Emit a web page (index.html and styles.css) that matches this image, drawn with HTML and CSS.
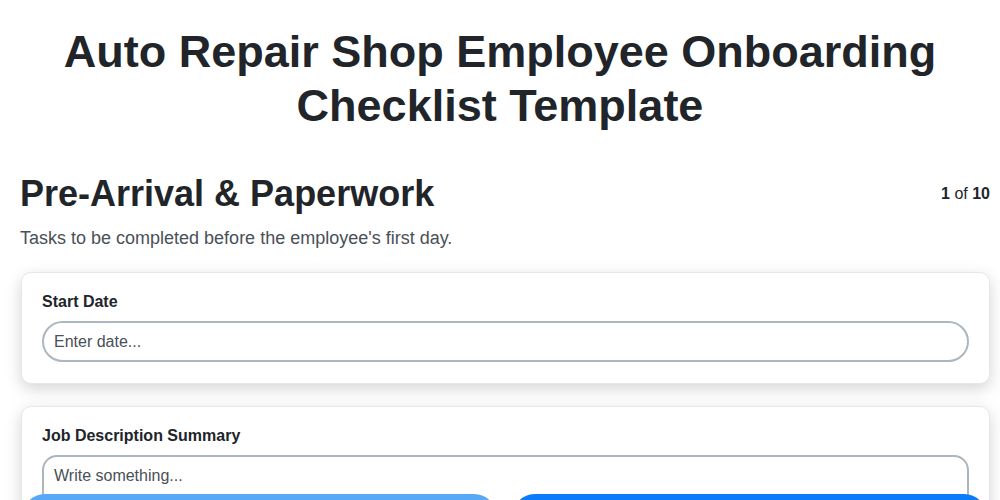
FILE: index.html
```html
<!DOCTYPE html>
<html lang="en">
<head>
    <meta charset="UTF-8">
    <meta name="viewport" content="width=device-width, initial-scale=1.0">
    <title>Auto Repair Shop Employee Onboarding Checklist Template</title>
    <link rel="stylesheet" href="styles.css">
</head>
<body>
    <h1 class="page-title">Auto Repair Shop Employee Onboarding Checklist Template</h1>

    <div class="section">
        <div class="section-head">
            <h2 class="section-title">Pre-Arrival &amp; Paperwork</h2>
            <div class="step"><b>1</b> of <b>10</b></div>
        </div>
        <p class="section-desc">Tasks to be completed before the employee's first day.</p>

        <div class="card">
            <label class="field-label" for="start-date">Start Date</label>
            <input class="field-input" id="start-date" type="text" placeholder="Enter date...">
        </div>

        <div class="card">
            <label class="field-label" for="job-summary">Job Description Summary</label>
            <textarea class="field-area" id="job-summary" rows="4" placeholder="Write something..."></textarea>
        </div>

        <div class="card">
            <label class="field-label" for="paperwork">Paperwork Received</label>
            <input class="field-input" id="paperwork" type="text" placeholder="Enter text...">
        </div>
    </div>

    <div class="nav-buttons">
        <button class="btn btn-prev">Previous</button>
        <button class="btn btn-next">Next</button>
    </div>
</body>
</html>
```

FILE: styles.css
```css
body {
    font-family: "Liberation Sans", Arial, sans-serif;
    color: #212529;
    margin: 0;
    padding: 0 0 80px;
    background: #fff;
}
.page-title {
    font-size: 45px;
    line-height: 1.2;
    text-align: center;
    margin: 25px 0 39px;
}
.section {
    padding: 0 10px 0 20px;
}
.section-head {
    display: flex;
    justify-content: space-between;
    align-items: center;
}
.section-title {
    font-size: 36px;
    margin: 0;
    line-height: 1.2;
}
.step {
    font-size: 16px;
}
.section-desc {
    font-size: 18px;
    color: #495057;
    margin: 13px 0 23px;
}
.card {
    background: #fff;
    border: 1px solid #e5e7eb;
    border-radius: 10px;
    box-shadow: 0 5px 16px rgba(0, 0, 0, 0.17);
    padding: 20px 20px 21px;
    margin: 0 0 22px 1px;
}
.field-label {
    display: block;
    font-weight: bold;
    font-size: 16px;
    margin-bottom: 10px;
}
.field-input,
.field-area {
    display: block;
    width: 100%;
    box-sizing: border-box;
    font-family: inherit;
    font-size: 16px;
    color: #212529;
    border: 2px solid #adb5bd;
    background: #fff;
}
.field-input {
    height: 41px;
    padding: 0 10px;
    border-radius: 21px;
}
.field-area {
    padding: 10px 10px 9px;
    border-radius: 15px;
    resize: vertical;
}
.field-input::placeholder,
.field-area::placeholder {
    color: #495057;
}
.nav-buttons {
    position: fixed;
    left: 22px;
    right: 13px;
    bottom: -40px;
    display: flex;
    gap: 15px;
}
.btn {
    flex: 1;
    height: 46px;
    border: none;
    border-radius: 23px;
    color: #fff;
    font-size: 16px;
    font-weight: bold;
    font-family: inherit;
}
.btn-prev {
    background: #58a8f8;
}
.btn-next {
    background: #0a7cfb;
}
```
